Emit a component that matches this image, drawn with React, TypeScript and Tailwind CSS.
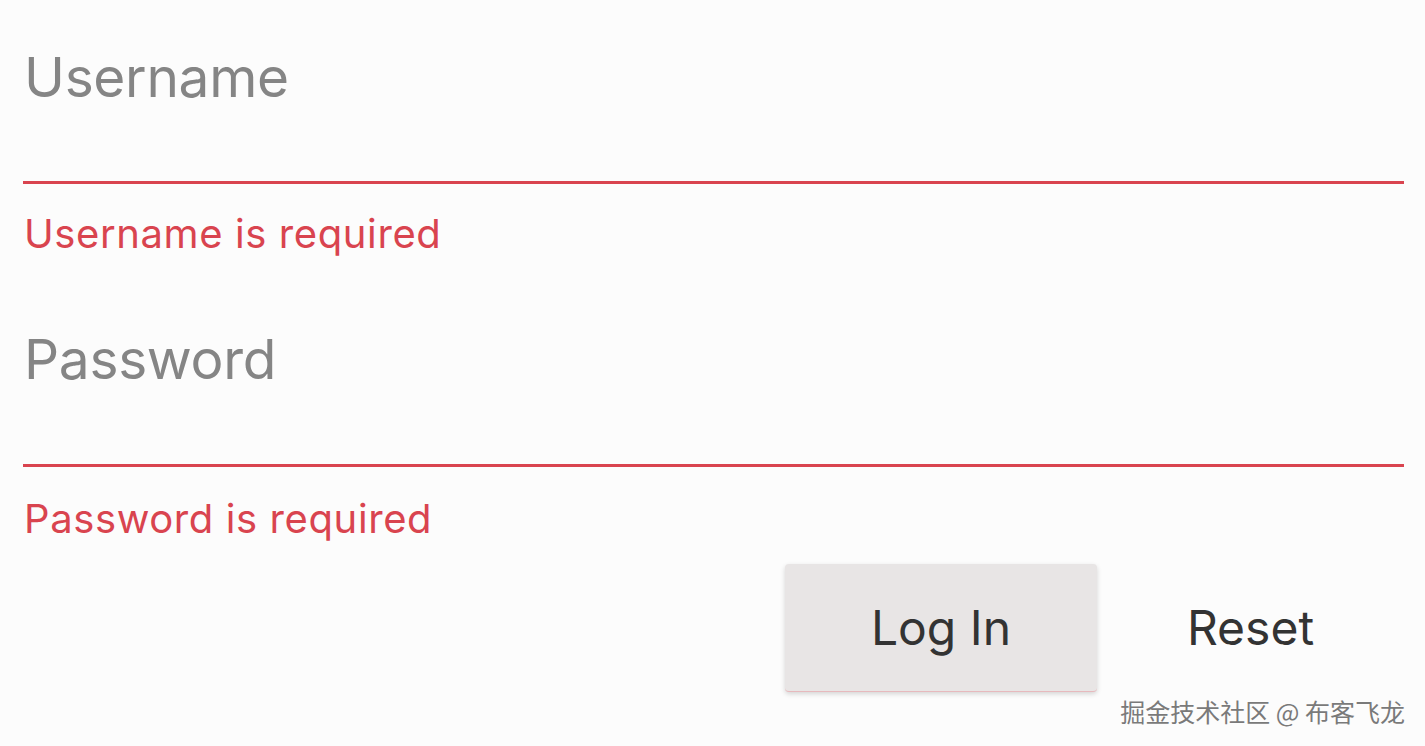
export default function App() {
  const font = { fontFamily: "Inter, 'Noto Sans', sans-serif" }

  return (
    <div className="relative min-h-screen w-full bg-[#fcfcfc] pl-[23px] pr-[21px] pt-[50px]" style={font}>
      <form className="flex flex-col" onSubmit={(e) => e.preventDefault()}>
        <div className="border-b-[3px] border-[#d9444f] pb-[76px]">
          <label className="block pl-[1px] text-[55px] leading-none tracking-[-0.3px] text-[#858585]">Username</label>
        </div>
        <p className="mt-[30px] pl-[1px] text-[40px] leading-none tracking-[0.6px] text-[#d9444f]">Username is required</p>

        <div className="mt-[78px] border-b-[3px] border-[#d9444f] pb-[77px]">
          <label className="block pl-[1px] text-[55px] leading-none tracking-[-0.3px] text-[#858585]">Password</label>
        </div>
        <p className="mt-[32px] pl-[1px] text-[40px] leading-none tracking-[0.6px] text-[#d9444f]">Password is required</p>

        <div className="mt-[25px] flex justify-end">
          <button
            type="submit"
            className="flex h-[128px] w-[312px] items-center justify-center rounded-[4px] border-b border-[#e7b9bd] bg-[#e8e5e5] text-[48px] text-[#333333] shadow-[0_2px_5px_rgba(0,0,0,0.16)]"
          >
            Log In
          </button>
          <button type="reset" className="flex h-[128px] w-[307px] items-center justify-center text-[48px] text-[#333333]">
            Reset
          </button>
        </div>
      </form>

      <div
        className="absolute bottom-[22px] right-[20px] text-[25px] leading-none text-[#7a7a7a] [text-shadow:0_0_2px_#fff,0_0_2px_#fff]"
        style={{ fontFamily: "'Noto Sans CJK SC', sans-serif" }}
      >
        掘金技术社区 @ 布客飞龙
      </div>
    </div>
  )
}
